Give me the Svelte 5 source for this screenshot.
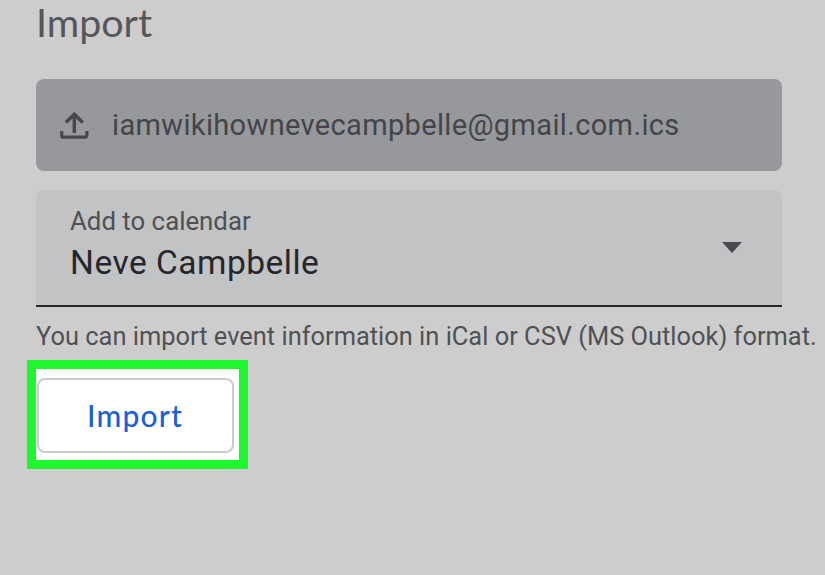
<script>
  const file = 'iamwikihownevecampbelle@gmail.com.ics';
</script>

<main class="page">
  <h1>Import</h1>
  <div class="upload">
    <svg class="up" viewBox="0 0 30 30" width="30" height="30" aria-hidden="true">
      <path d="M15.3 22V3.5M6.8 11.5 15.3 3.2l8.5 8.3" fill="none" stroke="#47484c" stroke-width="3.4"/>
      <path d="M2.7 20v4.4a1.8 1.8 0 0 0 1.8 1.8h21.6a1.8 1.8 0 0 0 1.8-1.8V20" fill="none" stroke="#47484c" stroke-width="3.2"/>
    </svg>
    <span class="file">{file}</span>
  </div>
  <div class="select">
    <div class="values">
      <span class="label">Add to calendar</span>
      <span class="value">Neve Campbelle</span>
    </div>
    <span class="caret"></span>
  </div>
  <p class="hint">You can import event information in iCal or CSV (MS Outlook) format.</p>
  <div class="highlight">
    <button type="button">Import</button>
  </div>
</main>

<style>
  :global(body) {
    margin: 0;
    background: #cdcdcd;
  }
  .page {
    width: 825px;
    height: 575px;
    box-sizing: border-box;
    overflow: hidden;
    padding: 0 0 0 36px;
    background: #cdcdcd;
    font-family: Roboto, "Liberation Sans", sans-serif;
  }
  h1 {
    margin: 0;
    height: 79px;
    box-sizing: border-box;
    font: 400 39.4px/44px Lato, sans-serif;
    color: #55565a;
  }
  .upload {
    width: 746px;
    height: 92px;
    box-sizing: border-box;
    display: flex;
    align-items: center;
    gap: 23px;
    padding-left: 23px;
    border-radius: 8px;
    background: #97989c;
  }
  .up {
    flex: none;
    margin-top: 1px;
  }
  .file {
    font-size: 29px;
    letter-spacing: 0.35px;
    color: #44454a;
  }
  .select {
    width: 746px;
    height: 117px;
    margin-top: 19px;
    box-sizing: border-box;
    display: flex;
    align-items: center;
    justify-content: space-between;
    padding: 0 40px 0 34px;
    border-radius: 8px 8px 0 0;
    border-bottom: 2px solid #26272b;
    background: #c2c3c5;
  }
  .values {
    display: flex;
    flex-direction: column;
    margin-top: -3px;
  }
  .label {
    font-size: 25.8px;
    line-height: 28px;
    margin-bottom: 6px;
    color: #4f5054;
  }
  .value {
    font-size: 33.5px;
    line-height: 44px;
    letter-spacing: 0.5px;
    color: #26272b;
  }
  .caret {
    width: 0;
    height: 0;
    margin-top: -1px;
    border-left: 10.5px solid transparent;
    border-right: 10.5px solid transparent;
    border-top: 11px solid #48494d;
  }
  .hint {
    margin: 14px 0 0;
    font-size: 25.43px;
    line-height: 30px;
    white-space: nowrap;
    color: #505155;
  }
  .highlight {
    width: 221px;
    height: 108.5px;
    margin: 9px 0 0 -9px;
    box-sizing: border-box;
    padding: 8.5px 5px 6px 0.5px;
    border: 9.5px solid #1ef72e;
    background: #fff;
  }
  button {
    display: block;
    width: 197px;
    height: 75.5px;
    box-sizing: border-box;
    padding: 0;
    border: 2px solid #c9cad0;
    border-radius: 8px;
    background: #fff;
    font: 500 30px Lato, sans-serif;
    letter-spacing: 1.2px;
    color: #1d5fd8;
  }
</style>
